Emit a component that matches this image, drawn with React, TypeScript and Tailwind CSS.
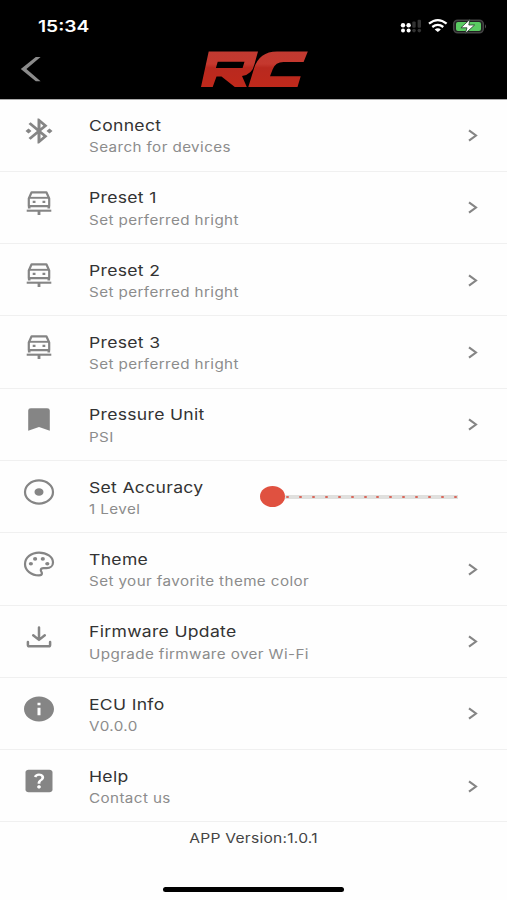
import type { ReactNode } from "react";
import { MdBluetoothConnected, MdHelpCenter, MdInfo } from "react-icons/md";

const stretch = { preserveAspectRatio: "none", className: "h-[30px] w-9" };

function CarIcon() {
  return (
    <svg width="36" height="30" viewBox="0 0 36 30" fill="none" stroke="currentColor">
      <path d="M10.6 4.3h14.8l2.8 6.2v7.6H7.8v-7.6z" strokeWidth="2.2" strokeLinejoin="round" />
      <path d="M7.8 9.8h20.4" strokeWidth="1.9" />
      <path d="M8.2 18v2.6M27.8 18v2.6" strokeWidth="2.6" />
      <path d="M11.7 13.9h2.8M21.5 13.9h2.8" strokeWidth="2.4" />
      <path d="M5.7 22.7h24.6" strokeWidth="2.1" />
      <path d="M18 22v5" strokeWidth="2.8" />
    </svg>
  );
}

function BookmarkIcon() {
  return (
    <svg width="36" height="30" viewBox="0 0 36 30" fill="currentColor">
      <path d="M9.8 3.3h16.4q2.6 0 2.6 2.2v20.2L18 22 7.2 25.7V5.5q0-2.2 2.6-2.2z" />
    </svg>
  );
}

function TargetIcon() {
  return (
    <svg width="36" height="30" viewBox="0 0 36 30" fill="none" stroke="currentColor" strokeWidth="2.2">
      <ellipse cx="18" cy="15" rx="14" ry="11.6" />
      <ellipse cx="18" cy="15" rx="4.5" ry="3.8" fill="currentColor" stroke="none" />
    </svg>
  );
}

function PaletteIcon() {
  return (
    <svg width="36" height="30" viewBox="0 0 36 30" fill="none" stroke="currentColor" strokeWidth="2.2">
      <path d="M18 3.6C10.2 3.6 4 8.7 4 15s6.2 11.4 14 11.4c1.9 0 2.9-.9 2.9-2.1 0-1.5-1.1-1.8-1.1-3 0-1.3 1.2-2.1 2.8-2.1h2.9c3.9 0 6.5-2.5 6.5-5.7C32 7.8 25.7 3.6 18 3.6z" />
      <g fill="currentColor" stroke="none">
        <ellipse cx="9.9" cy="14.7" rx="2.1" ry="1.8" />
        <ellipse cx="14.1" cy="9.9" rx="2.1" ry="1.8" />
        <ellipse cx="21.8" cy="9.9" rx="2.1" ry="1.8" />
        <ellipse cx="26.3" cy="14.7" rx="2.1" ry="1.8" />
      </g>
    </svg>
  );
}

function DownloadIcon() {
  return (
    <svg width="36" height="30" viewBox="0 0 36 30" fill="none" stroke="currentColor" strokeWidth="2.5" strokeLinecap="round" strokeLinejoin="round">
      <path d="M18 5.5v12.2M12.2 13.2l5.8 4.7 5.8-4.7M6.9 20v2.9q0 1.3 1.5 1.3h19.2q1.5 0 1.5-1.3V20" />
    </svg>
  );
}

type Item = { title: string; detail: string; icon: ReactNode; slider?: boolean };

const items: Item[] = [
  { title: "Connect", detail: "Search for devices", icon: <MdBluetoothConnected {...stretch} /> },
  { title: "Preset 1", detail: "Set perferred hright", icon: <CarIcon /> },
  { title: "Preset 2", detail: "Set perferred hright", icon: <CarIcon /> },
  { title: "Preset 3", detail: "Set perferred hright", icon: <CarIcon /> },
  { title: "Pressure Unit", detail: "PSI", icon: <BookmarkIcon /> },
  { title: "Set Accuracy", detail: "1 Level", icon: <TargetIcon />, slider: true },
  { title: "Theme", detail: "Set your favorite theme color", icon: <PaletteIcon /> },
  { title: "Firmware Update", detail: "Upgrade firmware over Wi-Fi", icon: <DownloadIcon /> },
  { title: "ECU Info", detail: "V0.0.0", icon: <MdInfo {...stretch} /> },
  { title: "Help", detail: "Contact us", icon: <MdHelpCenter {...stretch} /> },
];

function AccuracySlider() {
  return (
    <div className="mt-[25.5px] mr-[49px] flex items-center">
      <div className="h-[21px] w-[25px] rounded-[50%] bg-[#e05140]" />
      <div className="flex h-1 w-[173px] items-center justify-between bg-[#e0e0de] pr-px pl-[1px]">
        {Array.from({ length: 14 }, (_, i) => (
          <span key={i} className="h-[2px] w-[3px] rounded-full bg-[#d9685c]" />
        ))}
      </div>
    </div>
  );
}

function Row({ item }: { item: Item }) {
  return (
    <li className="flex h-[72.3px] items-start border-b border-[#f0f0f0]">
      <div className="mt-4 ml-[21px] w-[68px] shrink-0 text-[#858585]">{item.icon}</div>
      <div className="flex-1 whitespace-nowrap pt-[16.7px]">
        <div className="w-max origin-left scale-x-[1.17] text-[15px] leading-5 tracking-[0.27px] text-[#333]">{item.title}</div>
        <div className="mt-[2.3px] w-max origin-left scale-x-[1.17] text-[13px] leading-[18px] tracking-[0.34px] text-[#8c8c8c]">{item.detail}</div>
      </div>
      {item.slider ? (
        <AccuracySlider />
      ) : (
        <svg className="mt-[29.5px] mr-[28px]" width="12" height="13" viewBox="0 0 12 13" fill="none" stroke="#858585" strokeWidth="2.1">
          <path d="M2 1.3l7 5.2-7 5.2" />
        </svg>
      )}
    </li>
  );
}

function StatusIcons() {
  return (
    <svg width="88" height="18" viewBox="0 0 88 18">
      <g fill="#fff">
        <circle cx="4" cy="9.2" r="2.2" /><circle cx="9.6" cy="9.2" r="2.2" />
        <circle cx="4" cy="14.6" r="2" /><circle cx="9.6" cy="14.6" r="2" />
      </g>
      <g fill="#333">
        <rect x="13.3" y="5.5" width="3.4" height="6.2" rx="1" /><rect x="18.6" y="3.7" width="3.4" height="8" rx="1" />
        <circle cx="15" cy="14.6" r="1.8" /><circle cx="20.3" cy="14.6" r="1.8" />
      </g>
      <g fill="none" stroke="#fff" strokeWidth="2.3">
        <path d="M30 7.6q8.8-7 17.6 0M33.3 11q5.5-4.3 11 0" />
      </g>
      <path d="M35.7 13.4q3.1-2.3 6.2 0l-3.1 2.7z" fill="#fff" />
      <rect x="54.7" y="4.2" width="29.6" height="12.6" rx="4" fill="#202020" stroke="#454545" strokeWidth="1.5" />
      <path d="M86 8.2q2 2.2 0 4.4z" fill="#505050" />
      <rect x="57" y="6" width="25" height="9" rx="2" fill="#5acb62" />
      <path d="M71 3.3l-9.1 8.5H68l-1.7 5.7L75.6 9h-5.8z" fill="#fff" stroke="#25352a" strokeWidth=".8" />
    </svg>
  );
}

function Logo() {
  return (
    <svg width="108" height="38" viewBox="0 0 108 38" role="img" aria-label="RC">
      <defs>
        <linearGradient id="red" x1="0" y1="0" x2="0" y2="1">
          <stop offset="0" stopColor="#c23a31" />
          <stop offset=".35" stopColor="#c5382e" />
          <stop offset=".46" stopColor="#b9291f" />
          <stop offset="1" stopColor="#bf291b" />
        </linearGradient>
      </defs>
      <g fill="url(#red)">
        <path fillRule="evenodd" d="M8.7 1.5H58L54.5 14Q52.3 24.5 42 26L46.8 37H34.8L21.5 26.5H16.5L12.7 37H1zM17.7 11.8L15.9 18H42.6L44.5 11.8z" />
        <path d="M107.8 1.5L103.6 12H83.5Q75.5 12 72.7 19.2L70 26.3H100.7L97.5 37H48.3L54 18.5Q59.2 1.5 77 1.5z" />
      </g>
    </svg>
  );
}

export default function App() {
  return (
    <main className="flex h-[900px] w-[507px] flex-col overflow-hidden bg-[#fefefe] font-['Inter','Liberation_Sans',sans-serif]">
      <header className="h-[99.5px] shrink-0 border-b border-[#aaa] bg-black">
        <div className="flex h-[50px] items-start justify-between pt-4 pr-[20px] pl-[38px]">
          <span className="origin-left scale-x-[1.2] text-base leading-5 font-semibold text-white">15:34</span>
          <StatusIcons />
        </div>
        <div className="flex items-start">
          <svg className="mt-[6px] ml-[20px]" width="22" height="27" viewBox="0 0 22 27" fill="#8b8b8b">
            <path d="M15.8 1h4.8L6.4 13l14.2 12.3h-4.8L.8 13z" />
          </svg>
          <div className="ml-[158px]"><Logo /></div>
        </div>
      </header>
      <ul>
        {items.map((item) => <Row key={item.title} item={item} />)}
      </ul>
      <footer className="flex flex-1 flex-col items-center">
        <p className="mt-[6px] scale-x-[1.2] text-[13px] leading-5 tracking-[0.2px] text-[#444]">APP Version:1.0.1</p>
        <div className="mt-[38.5px] h-[5px] w-[181px] rounded-full bg-black" />
      </footer>
    </main>
  );
}
